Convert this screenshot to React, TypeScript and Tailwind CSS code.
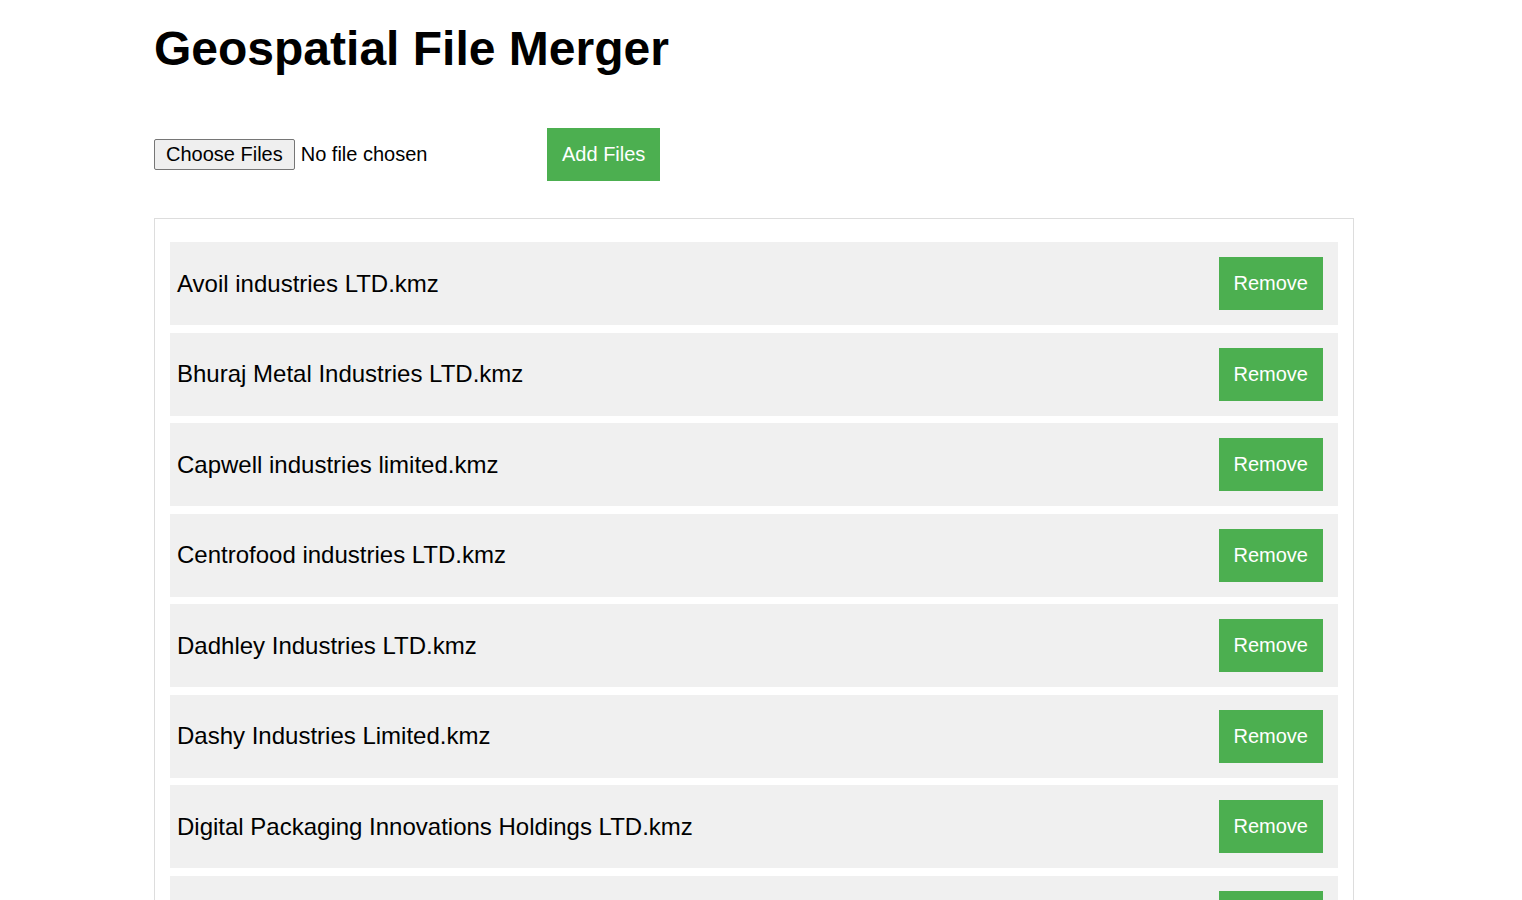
import React from "react";

const files = [
  "Avoil industries LTD.kmz",
  "Bhuraj Metal Industries LTD.kmz",
  "Capwell industries limited.kmz",
  "Centrofood industries LTD.kmz",
  "Dadhley Industries LTD.kmz",
  "Dashy Industries Limited.kmz",
  "Digital Packaging Innovations Holdings LTD.kmz",
  "Elgon Kenya Limited.kmz",
  "Fairdeal Plastics LTD.kmz",
];

export default function App() {
  return (
    <div className="min-h-screen bg-white text-black" style={{ fontFamily: '"Liberation Sans", Arial, sans-serif' }}>
      <div className="ml-[154px] w-[1200px] pt-[21px] pb-8">
        <h1 className="text-[48px] font-bold leading-[1.15]">Geospatial File Merger</h1>
        <div className="mt-[52px] flex items-center">
          <div className="flex w-[393px] items-center text-[20px] leading-[1.15]">
            <span className="rounded-[2px] border border-[#767676] bg-[#efefef] px-[11px] py-[3px] text-black">
              Choose Files
            </span>
            <span className="ml-[6px]">No file chosen</span>
          </div>
          <button className="bg-[#4CAF50] px-[15px] py-[15px] text-[20px] leading-[1.15] text-white">
            Add Files
          </button>
        </div>
        <div className="mt-[37px] border border-[#dddddd] px-[15px] pb-[15px] pt-[23px]">
          <div className="flex flex-col gap-[7.5px]">
            {files.map((f) => (
              <div key={f} className="flex items-center justify-between bg-[#f0f0f0] py-[15px] pl-[7px] pr-[15px]">
                <span className="text-[24px] leading-[1.15] text-black">{f}</span>
                <button className="bg-[#4CAF50] px-[15px] py-[15px] text-[20px] leading-[1.15] text-white">
                  Remove
                </button>
              </div>
            ))}
          </div>
        </div>
      </div>
    </div>
  );
}
